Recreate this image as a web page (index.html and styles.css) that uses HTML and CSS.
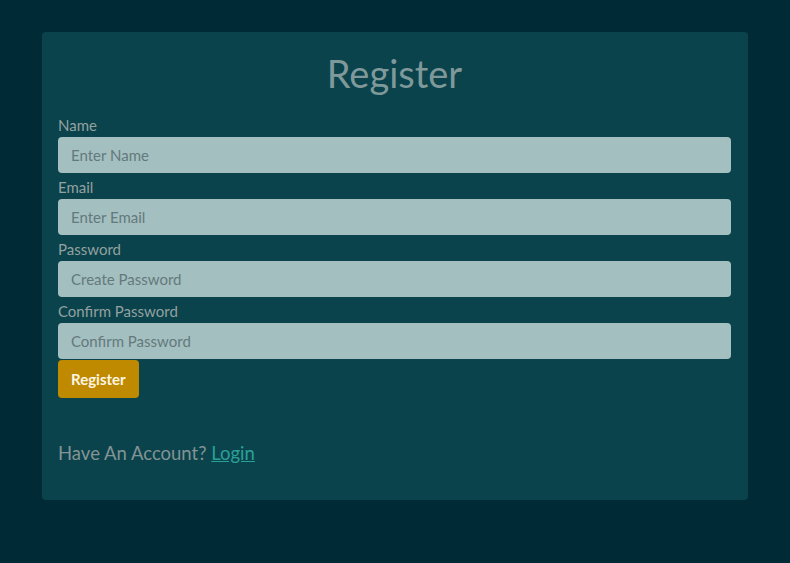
FILE: index.html
```html
<!DOCTYPE html>
<html>
<head>
<meta charset="utf-8">
<link rel="stylesheet" href="styles.css">
</head>
<body>
<main class="page">
  <section class="card">
    <h1 class="title">Register</h1>
    <form class="form">
      <label class="label" for="name">Name</label>
      <input class="input" id="name" type="text" placeholder="Enter Name">
      <label class="label" for="email">Email</label>
      <input class="input" id="email" type="email" placeholder="Enter Email">
      <label class="label" for="pw">Password</label>
      <input class="input" id="pw" type="password" placeholder="Create Password">
      <label class="label" for="pw2">Confirm Password</label>
      <input class="input" id="pw2" type="password" placeholder="Confirm Password">
      <button class="btn" type="button">Register</button>
    </form>
    <p class="footer">Have An Account? <a class="link" href="#">Login</a></p>
  </section>
</main>
</body>
</html>
```
FILE: styles.css
```css
html, body {
  margin: 0;
  padding: 0;
  background: #002b36;
  font-family: "Lato", "Noto Sans", sans-serif;
}
.page {
  padding: 32px 42px 0 42px;
}
.card {
  background: #0a434b;
  border-radius: 4px;
  height: 468px;
  box-sizing: border-box;
  padding: 0 17px 0 16px;
}
.title {
  margin: 0;
  padding-top: 19px;
  height: 81px;
  box-sizing: border-box;
  text-align: center;
  font-size: 38px;
  font-weight: 400;
  line-height: 44px;
  color: #7f999b;
}
.form {
  display: flex;
  flex-direction: column;
  align-items: flex-start;
}
.label {
  font-size: 15px;
  line-height: 24px;
  height: 24px;
  color: #93a1a1;
}
.input {
  width: 100%;
  height: 36px;
  box-sizing: border-box;
  border: none;
  border-radius: 4px;
  background: #a4bfbf;
  padding: 0 13px;
  margin: 0 0 2px 0;
  font-family: inherit;
  font-size: 15px;
  color: #2b3d40;
  outline: none;
}
.input::placeholder {
  color: #63797d;
}
.btn {
  margin-top: -1px;
  height: 38px;
  padding: 0 13px;
  border: none;
  border-radius: 4px;
  background: #bf8a00;
  color: #fdf6e3;
  font-family: inherit;
  font-size: 15px;
  font-weight: 700;
}
.footer {
  margin: 43px 0 0 0;
  font-size: 18.5px;
  line-height: 24px;
  color: #839496;
}
.link {
  color: #2aa198;
}
```
